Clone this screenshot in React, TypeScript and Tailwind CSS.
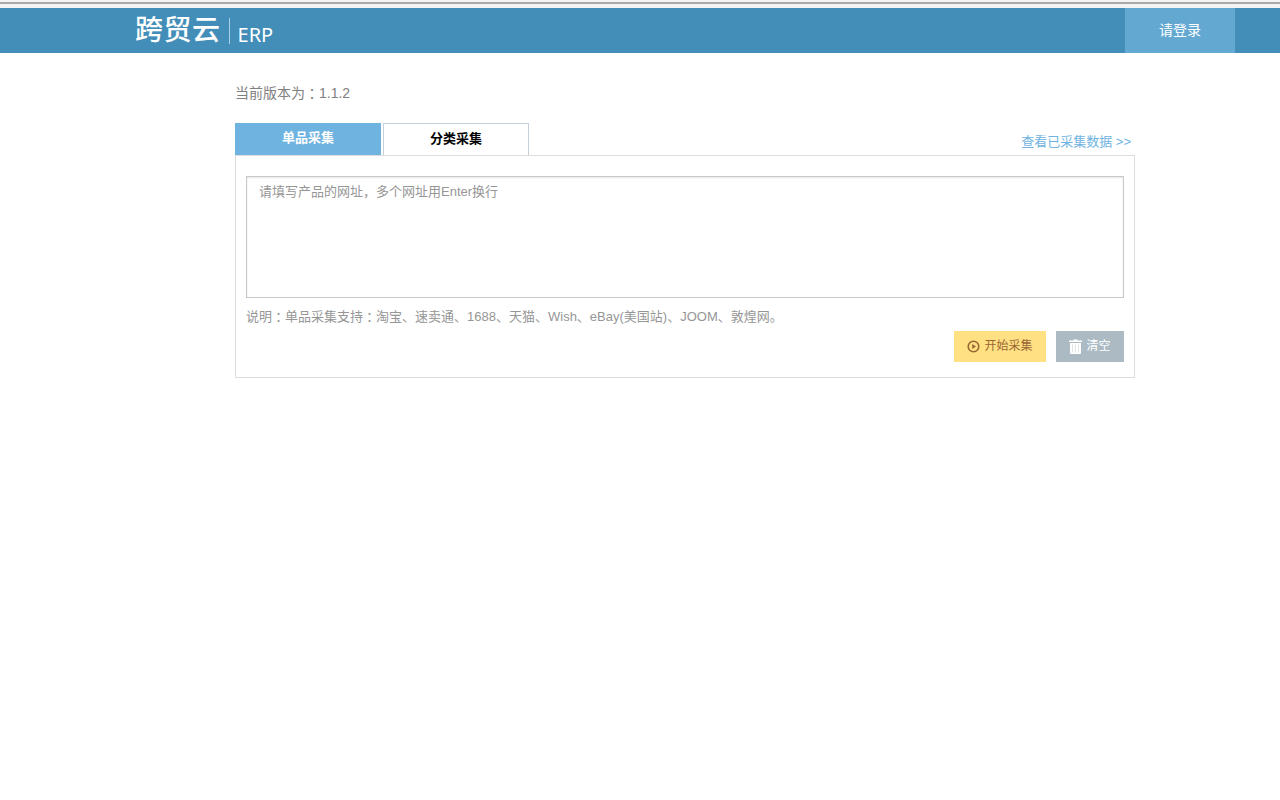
const font = "font-['Liberation_Sans','Noto_Sans_CJK_SC',sans-serif]";

// the reference font centres the full-width colon, TC does the same
function Colon() {
  return <span className="font-['Noto_Sans_CJK_TC',sans-serif] leading-none align-[-1px]">：</span>;
}

function PlayIcon() {
  return (
    <svg className="w-[13px] h-[13px] shrink-0" viewBox="0 0 14 14" fill="none" stroke="#996633">
      <circle cx="7" cy="7" r="5.7" strokeWidth="1.7" />
      <path d="M5.6 4.2v5.6L9.8 7z" fill="#996633" stroke="none" />
    </svg>
  );
}

function TrashIcon() {
  return (
    <svg className="w-[13px] h-[15px] shrink-0" viewBox="0 0 13 15">
      <path d="M4.5 1.5V.5h4v1H13V3H0V1.5z" fill="#fff" />
      <path d="M1 4h11v10a1 1 0 0 1-1 1H2a1 1 0 0 1-1-1z" fill="#fff" />
      <path d="M3.5 5.5v8M6.5 5.5v8M9.5 5.5v8" stroke="#dfe4e0" strokeWidth="1" />
    </svg>
  );
}

export default function App() {
  return (
    <div className={`${font} min-h-[800px] bg-white text-[13px]`}>
      {/* browser strip */}
      <div className="h-[8px] bg-[#f4f4f4] pt-[2px]">
        <div className="h-[2px] bg-[#a9a9a9]" />
      </div>

      <header className="h-[45px] bg-[#438eb9] flex pl-[135px] pr-[45px] justify-between">
        <div className="flex items-center text-white">
          <span className="text-[28px] leading-none font-medium tracking-[0.5px]">跨贸云</span>
          <span className="w-px h-[26px] bg-[#a9d0e6] ml-[8px]" />
          <span className="font-['Noto_Sans',sans-serif] text-[20px] ml-[8px] mt-[8px]">ERP</span>
        </div>
        <a className="w-[110px] bg-[#62a8d1] text-white text-[14px] flex items-center justify-center">请登录</a>
      </header>

      <main className="w-[900px] ml-[235px]">
        <p className="text-[14px] text-[#808080] mt-[30px] h-[20px] leading-[20px]">当前版本为<Colon />1.1.2</p>

        <div className="flex items-end justify-between mt-[20px]">
          <div className="flex gap-[2px]">
            <button className="w-[146px] h-[32px] pb-[2px] bg-[#6fb3e0] text-white font-bold">单品采集</button>
            <button className="w-[146px] h-[32px] pb-[2px] bg-white border border-b-0 border-[#c5d0dc] text-black font-bold">分类采集</button>
          </div>
          <a className="text-[#6fb3e0] mr-[4px] leading-[18px] mb-[4px]">查看已采集数据 &gt;&gt;</a>
        </div>

        <section className="h-[223px] border border-[#dddddd] px-[10px] pt-[20px]">
          <textarea
            className="block w-full h-[122px] border border-[#c8c8c8] shadow-[inset_0_1px_2px_rgba(0,0,0,0.1)] px-[12px] py-[5px] resize-none outline-none placeholder:text-[#969696]"
            placeholder="请填写产品的网址，多个网址用Enter换行"
          />
          <p className="text-[#969696] mt-[10px] h-[18px] leading-[18px]">
            说明<Colon />单品采集支持<Colon />淘宝、速卖通、1688、天猫、Wish、eBay(美国站)、JOOM、敦煌网。
          </p>
          <div className="flex justify-end gap-[10px] mt-[5px]">
            <button className="w-[92px] h-[31px] pb-[1px] bg-[#ffe083] text-[#996633] text-[12px] flex items-center justify-center gap-[4px]">
              <PlayIcon />
              开始采集
            </button>
            <button className="w-[68px] h-[31px] pb-[1px] bg-[#abbac3] text-white text-[12px] flex items-center justify-center gap-[4px]">
              <TrashIcon />
              清空
            </button>
          </div>
        </section>
      </main>
    </div>
  );
}
